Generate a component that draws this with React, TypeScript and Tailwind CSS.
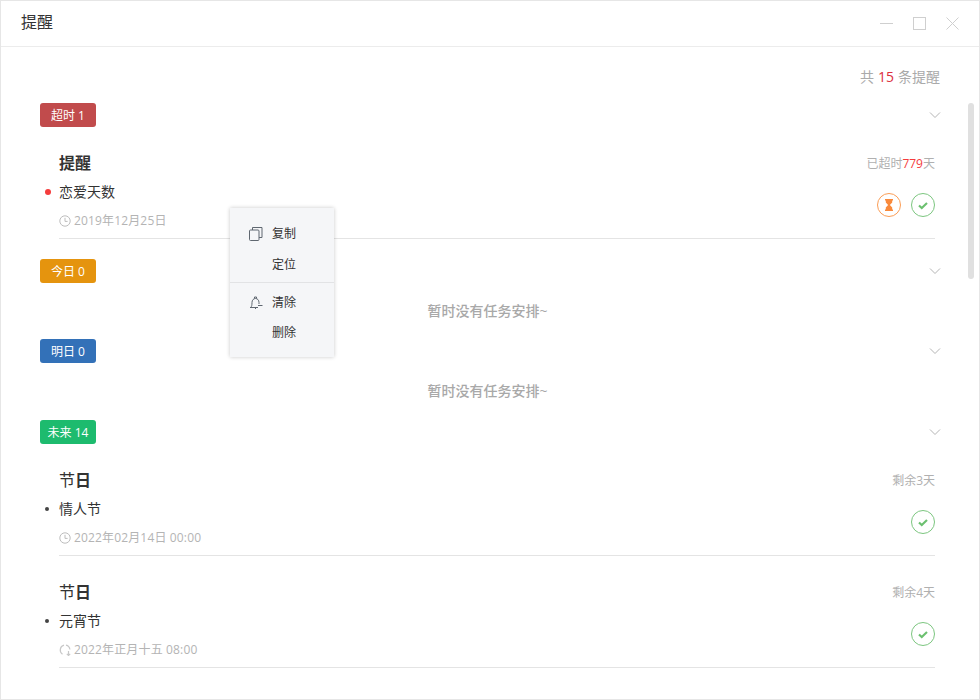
import React from 'react';

function ClockIcon() {
  return (
    <svg viewBox="0 0 12 12" className="h-3 w-3 shrink-0" fill="none" stroke="#bdbdbd" strokeWidth="1">
      <circle cx="6" cy="6" r="5.2" />
      <path d="M6 2.8V6.4H8.6" />
    </svg>
  );
}

function RepeatIcon() {
  return (
    <svg viewBox="0 0 12 12" className="h-3 w-3 shrink-0" fill="none" stroke="#c8c8c8" strokeWidth="1.2">
      <path d="M5 1.2A5 5 0 0 0 3.5 10.2" />
      <path d="M7 1.2A5 5 0 0 1 10.9 5.5" />
      <path d="M9.5 7V11.5M7.8 9.8L9.5 11.5L11.2 9.8" />
    </svg>
  );
}

function Chevron() {
  return (
    <svg viewBox="0 0 12 8" className="-mr-[6px] h-2 w-3" fill="none" stroke="#b5b5b5" strokeWidth="1">
      <path d="M1 1.5L6 6.5L11 1.5" />
    </svg>
  );
}

function CheckButton() {
  return (
    <div className="flex h-6 w-6 items-center justify-center rounded-full border border-[#7cc67f]">
      <svg viewBox="0 0 12 10" className="h-[9px] w-[10px]" fill="none" stroke="#6cc070" strokeWidth="2.6">
        <path d="M1.2 5L4.5 8L10.8 2" />
      </svg>
    </div>
  );
}

function DelayButton() {
  return (
    <div className="flex h-6 w-6 items-center justify-center rounded-full border border-[#fb9d55]">
      <svg viewBox="0 0 8 12" className="h-3 w-2" fill="#f98a3c">
        <path d="M0 0H8V1.5H7.2V3.6L4.9 6L7.2 8.4V10.5H8V12H0V10.5H0.8V8.4L3.1 6L0.8 3.6V1.5H0Z" />
      </svg>
    </div>
  );
}

function Tag({ color, children }: { color: string; children: React.ReactNode }) {
  return (
    <div className={`flex h-6 w-14 items-center justify-center rounded-[3px] pt-px text-xs text-white ${color}`}>
      {children}
    </div>
  );
}

function GroupHeader({ color, label, className }: { color: string; label: string; className?: string }) {
  return (
    <div className={`flex items-center justify-between ${className ?? ''}`}>
      <Tag color={color}>{label}</Tag>
      <Chevron />
    </div>
  );
}

function Empty() {
  return (
    <div className="mt-4 mb-4 h-6 text-center text-sm leading-6 font-medium text-[#a8a8a8]">
      暂时没有任务安排~
    </div>
  );
}

interface ItemProps {
  title: React.ReactNode;
  text: string;
  date: string;
  right: React.ReactNode;
  overdue?: boolean;
  repeat?: boolean;
}

function Item({ title, text, date, right, overdue, repeat }: ItemProps) {
  return (
    <div className="flex">
      <div className="w-[19px] shrink-0 pt-[62px]">
        {overdue ? (
          <div className="ml-[5px] h-[6px] w-[6px] rounded-full bg-[#f53c3c]" />
        ) : (
          <div className="mt-[1px] ml-[5px] h-1 w-1 rounded-full bg-[#444]" />
        )}
      </div>
      <div className="flex h-[112px] flex-1 justify-between border-b border-[#e4e4e4] pt-6">
        <div>
          <div className="h-6 text-[16px] leading-6 text-[#333]">{title}</div>
          <div className="mt-[5px] h-6 text-sm leading-6 text-[#333]">{text}</div>
          <div className="mt-[5px] flex h-6 items-center gap-[3px] text-xs tracking-[0.15px] text-[#b4b4b4]">
            {repeat ? <RepeatIcon /> : <ClockIcon />}
            <span>{date}</span>
          </div>
        </div>
        <div className="flex flex-col items-end">
          <div className="h-6 pt-px text-xs leading-6 text-[#b0b0b0]">{right}</div>
          <div className="mt-[18px] flex gap-[10px]">
            {overdue && <DelayButton />}
            <CheckButton />
          </div>
        </div>
      </div>
    </div>
  );
}

function ContextMenu() {
  return (
    <div className="absolute top-[207px] left-[229px] w-[104px] bg-[#f5f6f8] pt-[11px] pb-[9px] text-xs text-[#333] shadow-[0_0_4px_rgba(0,0,0,0.22)]">
      <div className="flex h-[30px] items-center">
        <svg viewBox="0 0 14 14" className="mr-[9px] ml-[19px] h-[14px] w-[14px]" fill="none" stroke="#5f6770" strokeWidth="1">
          <rect x="0.5" y="3" width="9.5" height="10.5" rx="1" />
          <path d="M3.5 3V0.5H13V10.5H10" />
        </svg>
        <span>复制</span>
      </div>
      <div className="mt-px flex h-[30px] items-center pl-[42px]">定位</div>
      <div className="mt-[2px] h-px bg-[#e2e3e5]" />
      <div className="mt-[5px] flex h-[30px] items-center">
        <svg viewBox="0 0 14 14" className="mr-[9px] ml-[19px] h-[14px] w-[14px]" fill="none" stroke="#5f6770" strokeWidth="1">
          <path d="M1.5 11.5C2.8 10.5 3 9 3 6.5C3 4 4.6 2.5 6.5 2.5C8.4 2.5 10 4 10 6.5V8" />
          <path d="M1 11.5H9" />
          <path d="M5.5 2.5V1H7.5V2.5" />
          <path d="M6.5 11.5V13" />
          <path d="M9 9.5H13.5" />
        </svg>
        <span>清除</span>
      </div>
      <div className="flex h-[30px] items-center pl-[42px]">删除</div>
    </div>
  );
}

export default function App() {
  return (
    <div
      className="relative h-[700px] w-[980px] overflow-hidden border border-[#e6e6e6] bg-white"
      style={{ fontFamily: '"Open Sans", "Noto Sans CJK SC", sans-serif' }}
    >
      <div className="flex h-[46px] items-center justify-between border-b border-[#ececec] pr-5 pl-5">
        <div className="pb-[3px] text-[16px] text-[#333]">提醒</div>
        <div className="flex items-center gap-[20px]">
          <svg viewBox="0 0 13 13" className="h-[13px] w-[13px]" fill="none" stroke="#cfcfcf" strokeWidth="1">
            <path d="M0 6.5H13" />
          </svg>
          <svg viewBox="0 0 13 13" className="h-[13px] w-[13px]" fill="none" stroke="#cfcfcf" strokeWidth="1">
            <rect x="0.5" y="0.5" width="12" height="12" />
          </svg>
          <svg viewBox="0 0 13 13" className="h-[13px] w-[13px]" fill="none" stroke="#cfcfcf" strokeWidth="1">
            <path d="M0.5 0.5L12.5 12.5M12.5 0.5L0.5 12.5" />
          </svg>
        </div>
      </div>

      <div className="pr-[39px] pl-[39px]">
        <div className="mt-[20px] flex h-5 items-center justify-end gap-[4px] text-sm text-[#aaa]">
          <span>共</span>
          <span className="text-[#dc2f3c]">15</span>
          <span>条提醒</span>
        </div>

        <div className="pr-[5px]">
          <GroupHeader color="bg-[#c14b4c]" label="超时 1" className="mt-[16px]" />
          <Item
            overdue
            title={<span className="font-bold">提醒</span>}
            text="恋爱天数"
            date="2019年12月25日"
            right={
              <span>
                已超时<span className="text-[#f53c3c]">779</span>天
              </span>
            }
          />

          <GroupHeader color="bg-[#e5940e]" label="今日 0" className="mt-5" />
          <Empty />
          <GroupHeader color="bg-[#3371b8]" label="明日 0" />
          <Empty />
          <GroupHeader color="bg-[#1dbb6e]" label="未来 14" className="mt-[17px]" />
          <Item
            title={
              <span>
                节<span className="font-bold">日</span>
              </span>
            }
            text="情人节"
            date="2022年02月14日 00:00"
            right="剩余3天"
          />
          <Item
            repeat
            title={
              <span>
                节<span className="font-bold">日</span>
              </span>
            }
            text="元宵节"
            date="2022年正月十五 08:00"
            right="剩余4天"
          />
        </div>
      </div>

      <div className="absolute top-[102px] right-[5px] h-[176px] w-[6px] rounded-full bg-[#e0e0e0]" />
      <ContextMenu />
    </div>
  );
}
